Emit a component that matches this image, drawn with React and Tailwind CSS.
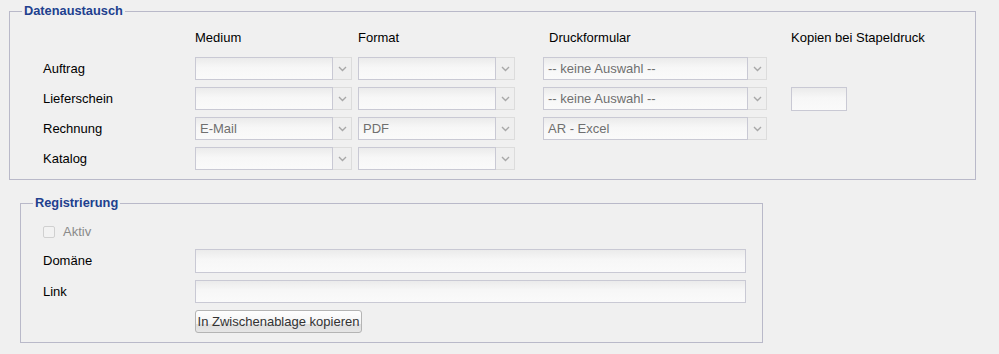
import React from 'react';

const Chevron = () => (
  <svg width="9" height="6" viewBox="0 0 9 6" fill="none">
    <path d="M1 1l3.5 3.5L8 1" stroke="#a8a8a8" strokeWidth="1.4" />
  </svg>
);

const Select = ({ inputW, value }) => (
  <div className="flex h-[23px]">
    <div
      className={`${inputW} h-full border border-[#c9c9d4] bg-[linear-gradient(#ebebeb,#f7f7f7_45%,#fafafa)] px-[4px] text-[13px] leading-[21px] text-[#6f6f6f]`}
    >
      {value}
    </div>
    <div className="flex h-full w-[19px] items-center justify-center border-y border-r border-[#dcdcdc] bg-[#efefef]">
      <Chevron />
    </div>
  </div>
);

const TextInput = ({ w, h }) => (
  <div className={`${w} ${h} border border-[#c9c9d4] bg-[linear-gradient(#ebebeb,#f7f7f7_45%,#fafafa)]`} />
);

const rows = [
  { label: 'Auftrag', medium: '', format: '', druck: '-- keine Auswahl --' },
  { label: 'Lieferschein', medium: '', format: '', druck: '-- keine Auswahl --', kopien: true },
  { label: 'Rechnung', medium: 'E-Mail', format: 'PDF', druck: 'AR - Excel' },
  { label: 'Katalog', medium: '', format: '' },
];

export default function App() {
  return (
    <div className="min-h-screen bg-[#f0f0f0] pt-[3px] font-['Liberation_Sans',Arial,sans-serif] text-[13px] text-black">
      {/* Datenaustausch */}
      <fieldset className="ml-[9px] w-[967px] border border-[#b9b9c9] pb-[9px] pl-[33px]">
        <legend className="-ml-[21px] px-[2px] text-[12.8px] font-bold leading-[16px] text-[#21408e]">
          Datenaustausch
        </legend>
        <div className="mt-[11px] flex h-[16px] items-center leading-[16px]">
          <div className="w-[152px]" />
          <div className="w-[163px]">Medium</div>
          <div className="w-[185px]">Format</div>
          <div className="w-[248px] pl-[6px]">Druckformular</div>
          <div>Kopien bei Stapeldruck</div>
        </div>
        <div className="mt-[11px] flex flex-col gap-[7px]">
          {rows.map((r) => (
            <div key={r.label} className="flex h-[23px] items-center">
              <div className="w-[152px]">{r.label}</div>
              <div className="w-[163px]">
                <Select inputW="w-[138px]" value={r.medium} />
              </div>
              <div className="w-[185px]">
                <Select inputW="w-[138px]" value={r.format} />
              </div>
              <div className="w-[248px]">
                {r.druck !== undefined && <Select inputW="w-[205px]" value={r.druck} />}
              </div>
              {r.kopien && <TextInput w="w-[56px]" h="h-[24px]" />}
            </div>
          ))}
        </div>
      </fieldset>

      {/* Registrierung */}
      <fieldset className="ml-[20px] mt-[15px] w-[743px] border border-[#b9b9c9] pb-[9px] pl-[22px]">
        <legend className="-ml-[10px] px-[2px] text-[12.8px] font-bold leading-[16px] text-[#21408e]">
          Registrierung
        </legend>
        <div className="mt-[13px] flex h-[16px] items-center gap-[8px] text-[#8a8a8a]">
          <span className="h-[12px] w-[12px] rounded-[2px] border border-[#d0d0d0] bg-[#f2f2f2]" />
          <span>Aktiv</span>
        </div>
        <div className="mt-[9px] flex flex-col gap-[7px]">
          <div className="flex items-center">
            <div className="w-[152px]">Domäne</div>
            <TextInput w="w-[551px]" h="h-[24px]" />
          </div>
          <div className="flex items-center">
            <div className="w-[152px]">Link</div>
            <TextInput w="w-[551px]" h="h-[23px]" />
          </div>
          <div className="flex items-center">
            <div className="w-[152px]" />
            <button className="h-[23px] w-[167px] rounded-[3px] border border-[#b4b4b4] bg-[linear-gradient(#fefefe,#f4f4f4_60%,#dedede_62%,#e6e6e6)] text-[13px] leading-[20px] text-[#333]">
              In Zwischenablage kopieren
            </button>
          </div>
        </div>
      </fieldset>
    </div>
  );
}
